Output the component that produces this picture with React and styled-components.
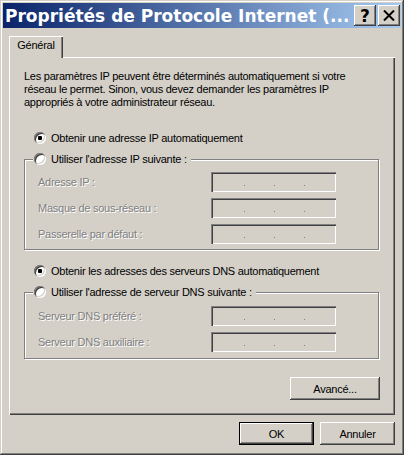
import React from 'react';
import styled, { createGlobalStyle } from 'styled-components';

const Global = createGlobalStyle`
  html, body { margin: 0; padding: 0; background: #d4d0c8; }
  body {
    font-family: "Liberation Sans", Arial, sans-serif;
    font-size: 11px;
    letter-spacing: -0.25px;
    color: #000;
  }
  * { box-sizing: border-box; }
`;

const Window = styled.div`
  width: 404px;
  height: 455px;
  padding: 3px;
  background: #d4d0c8;
  display: flex;
  flex-direction: column;
  box-shadow: inset -1px -1px #404040, inset 1px 1px #d4d0c8,
    inset -2px -2px #808080, inset 2px 2px #fff;
`;

const TitleBar = styled.div`
  height: 25px;
  display: flex;
  align-items: center;
  padding: 0 1px 0 2px;
  background: linear-gradient(to right, #0a246a, #a6caf0);
`;

const Title = styled.div`
  flex: 1;
  color: #fff;
  font-family: "DejaVu Sans", Verdana, sans-serif;
  font-weight: bold;
  font-size: 17px;
  letter-spacing: 0;
  white-space: nowrap;
  overflow: hidden;
`;

const CaptionButtons = styled.div`
  display: flex;
  gap: 2px;
`;

const CaptionButton = styled.div`
  width: 22px;
  height: 21px;
  display: flex;
  align-items: center;
  justify-content: center;
  background: #d4d0c8;
  font-family: "DejaVu Sans", Verdana, sans-serif;
  font-weight: bold;
  font-size: 17px;
  letter-spacing: 0;
  box-shadow: inset -1px -1px #404040, inset 1px 1px #fff,
    inset -2px -2px #808080;
`;

const Body = styled.div`
  flex: 1;
  display: flex;
  flex-direction: column;
  padding: 8px 6px 7px;
`;

const TabStrip = styled.div`
  display: flex;
  margin-bottom: -1px;
  position: relative;
  z-index: 1;
`;

const Tab = styled.div`
  width: 54px;
  height: 22px;
  padding-top: 3px;
  text-align: center;
  background: #d4d0c8;
  box-shadow: inset 1px 1px #fff, inset -1px 0 #404040, inset -2px 0 #808080;
`;

const Panel = styled.div`
  flex: 1;
  display: flex;
  flex-direction: column;
  padding: 13px 15px 13px 15px;
  box-shadow: inset 1px 1px #fff, inset -1px -1px #404040,
    inset -2px -2px #808080;
`;

const Intro = styled.p`
  margin: 0;
  line-height: 13px;
  white-space: nowrap;
`;

const RadioRow = styled.label`
  display: flex;
  align-items: center;
  gap: 5px;
  height: 16px;
  padding-left: ${(p) => p.$indent}px;
  margin-top: ${(p) => p.$top || 0}px;
  white-space: nowrap;
`;

const RadioCircle = styled.span`
  position: relative;
  width: 12px;
  height: 12px;
  border-radius: 50%;
  background: #fff;
  flex: none;
  box-shadow: inset 1px 1px 0 #808080, inset -1px -1px 0 #fff,
    inset 2px 2px 0 #404040, inset -2px -2px 0 #d4d0c8;
  &::after {
    content: '';
    display: ${(p) => (p.$checked ? 'block' : 'none')};
    position: absolute;
    left: 4px;
    top: 4px;
    width: 4px;
    height: 4px;
    border-radius: 1px;
    background: #000;
  }
`;

const GroupBox = styled.fieldset`
  margin: ${(p) => p.$top}px 1px 0 0;
  padding: ${(p) => p.$pad}px 0;
  border: 1px solid #808080;
  box-shadow: inset 1px 1px #fff, 1px 1px #fff;
  min-width: 0;
`;

const Legend = styled.legend`
  margin-left: 8px;
  padding: 0 4px 0 1px;
  background: #d4d0c8;
`;

const FieldGrid = styled.div`
  display: grid;
  grid-template-columns: 173px 125px;
  row-gap: 6px;
  align-items: center;
  padding-left: 13px;
`;

const DisabledLabel = styled.span`
  color: #808080;
  text-shadow: 1px 1px 0 #fff;
  white-space: nowrap;
`;

const IpField = styled.div`
  height: 20px;
  display: flex;
  align-items: flex-start;
  gap: 29px;
  padding: 13px 0 0 33px;
  background: #d4d0c8;
  box-shadow: inset 1px 1px #808080, inset 2px 2px #404040,
    inset -1px -1px #fff, inset -2px -2px #d4d0c8;
`;

const Dot = styled.span`
  width: 1px;
  height: 1px;
  background: #808080;
`;

const ButtonRow = styled.div`
  display: flex;
  justify-content: flex-end;
  gap: 6px;
  margin-top: ${(p) => p.$top}px;
`;

const Button = styled.div`
  width: ${(p) => p.$w}px;
  height: 23px;
  display: flex;
  align-items: center;
  justify-content: center;
  background: #d4d0c8;
  border: ${(p) => (p.$default ? '1px solid #000' : 'none')};
  box-shadow: inset -1px -1px #404040, inset 1px 1px #fff,
    inset -2px -2px #808080;
`;

const Field = ({ label }) => (
  <>
    <DisabledLabel>{label}</DisabledLabel>
    <IpField>
      <Dot />
      <Dot />
      <Dot />
    </IpField>
  </>
);

export default function App() {
  return (
    <>
      <Global />
      <Window>
        <TitleBar>
          <Title>Propriétés de Protocole Internet (...</Title>
          <CaptionButtons>
            <CaptionButton>?</CaptionButton>
            <CaptionButton>
              <svg width="12" height="11" viewBox="0 0 12 11">
                <path d="M1 0.5 L11 10.5 M11 0.5 L1 10.5" stroke="#000" strokeWidth="2" />
              </svg>
            </CaptionButton>
          </CaptionButtons>
        </TitleBar>
        <Body>
          <TabStrip>
            <Tab>Général</Tab>
          </TabStrip>
          <Panel>
            <Intro>
              Les paramètres IP peuvent être déterminés automatiquement si votre
              <br />
              réseau le permet. Sinon, vous devez demander les paramètres IP
              <br />
              appropriés à votre administrateur réseau.
            </Intro>
            <RadioRow $indent={10} $top={21}>
              <RadioCircle $checked />
              Obtenir une adresse IP automatiquement
            </RadioRow>
            <GroupBox $top={5} $pad={5}>
              <Legend>
                <RadioRow $indent={0}>
                  <RadioCircle />
                  Utiliser l'adresse IP suivante :
                </RadioRow>
              </Legend>
              <FieldGrid>
                <Field label="Adresse IP :" />
                <Field label="Masque de sous-réseau :" />
                <Field label="Passerelle par défaut :" />
              </FieldGrid>
            </GroupBox>
            <RadioRow $indent={10} $top={13}>
              <RadioCircle $checked />
              Obtenir les adresses des serveurs DNS automatiquement
            </RadioRow>
            <GroupBox $top={5} $pad={6}>
              <Legend>
                <RadioRow $indent={0}>
                  <RadioCircle />
                  Utiliser l'adresse de serveur DNS suivante :
                </RadioRow>
              </Legend>
              <FieldGrid>
                <Field label="Serveur DNS préféré :" />
                <Field label="Serveur DNS auxiliaire :" />
              </FieldGrid>
            </GroupBox>
            <ButtonRow $top={18}>
              <Button $w={90}>Avancé...</Button>
            </ButtonRow>
          </Panel>
          <ButtonRow $top={7}>
            <Button $w={75} $default>OK</Button>
            <Button $w={75}>Annuler</Button>
          </ButtonRow>
        </Body>
      </Window>
    </>
  );
}
